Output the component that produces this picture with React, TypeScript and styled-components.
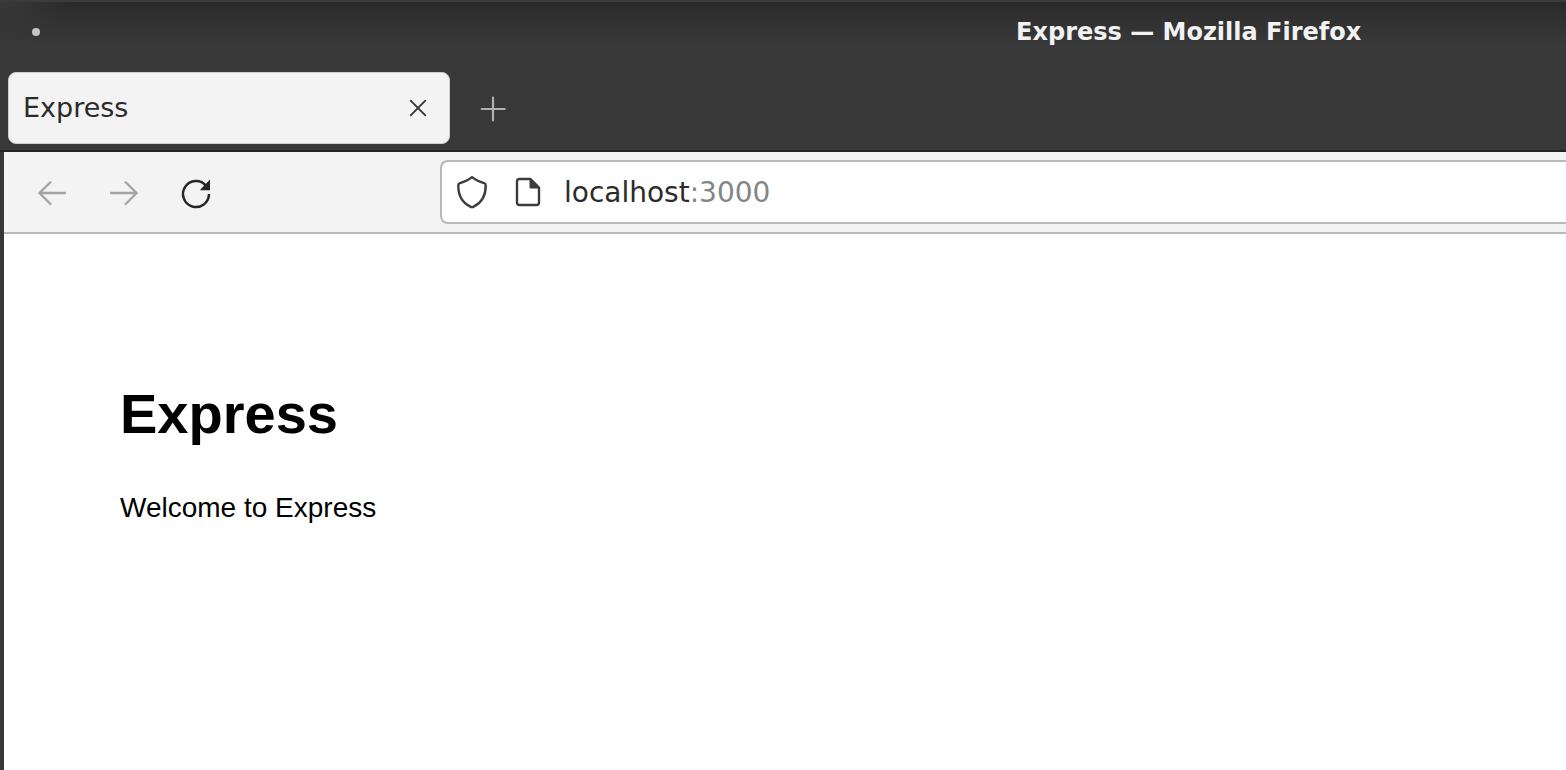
import React from 'react';
import styled, { createGlobalStyle } from 'styled-components';

const GlobalStyle = createGlobalStyle`
  * { box-sizing: border-box; }
  body { margin: 0; background: #383838; }
`;

const Window = styled.div`
  display: flex;
  flex-direction: column;
  min-height: 100vh;
  background: #383838;
  font-family: "DejaVu Sans", sans-serif;
  overflow: hidden;
`;

const TitleBar = styled.header`
  display: flex;
  align-items: center;
  height: 64px;
  padding: 0 0 2px 32px;
  border-top: 2px solid #3b3b3b;
  background: radial-gradient(ellipse 70px 60px at 0 0, #383838 0%, transparent 100%),
    linear-gradient(#2a2a2a 0, #303030 16px, #383838 42px);
`;

const MenuDot = styled.span`
  width: 8px;
  height: 8px;
  border-radius: 50%;
  background: #c4c4c4;
`;

const WindowTitle = styled.div`
  margin-left: 62%;
  padding-left: 25px;
  line-height: 28px;
  font-size: 24px;
  font-weight: 700;
  color: #f2f2f2;
  white-space: nowrap;
`;

const TabStrip = styled.div`
  display: flex;
  align-items: center;
  gap: 24px;
  height: 88px;
  padding: 2px 0 0 8px;
  border-bottom: 2px solid #262223;
`;

const Tab = styled.div`
  display: flex;
  align-items: center;
  justify-content: space-between;
  width: 442px;
  height: 72px;
  padding: 0 19px 0 14px;
  border: 1px solid #d0d0d0;
  border-radius: 8px;
  background: #f3f3f3;
  color: #2b2b2b;
  font-size: 27px;
  line-height: 32px;
`;

const IconButton = styled.button<{ $tone: string; $size: number }>`
  display: flex;
  align-items: center;
  justify-content: center;
  flex: none;
  width: ${(p) => p.$size}px;
  height: ${(p) => p.$size}px;
  padding: 0;
  border: 0;
  background: none;
  color: ${(p) => p.$tone};
`;

const Browser = styled.div`
  display: flex;
  flex-direction: column;
  flex: 1;
  margin-left: 4px;
  background: #fff;
`;

const Toolbar = styled.nav`
  display: flex;
  align-items: center;
  height: 82px;
  padding-left: 32px;
  border-bottom: 2px solid #b9b9b9;
  background: #f3f3f3;
`;

const NavButtons = styled.div`
  display: flex;
  flex: none;
  gap: 32px;
  width: 404px;
  padding-top: 2px;
`;

const AddressBar = styled.form`
  display: flex;
  align-items: center;
  flex: 1;
  height: 64px;
  padding-left: 10px;
  border: 2px solid #b9b9b9;
  border-right: 0;
  border-radius: 8px 0 0 8px;
  background: #fff;
`;

const SiteIcons = styled.div`
  display: flex;
  gap: 16px;
  color: #3c3c3c;
`;

const AddressField = styled.div`
  display: grid;
  flex: 1;
  padding: 2px 0 0 16px;
  font-size: 28px;
  line-height: 36px;
  color: #2b2b2b;
  white-space: nowrap;

  > * { grid-area: 1 / 1; }
`;

const Port = styled.span`
  color: #858585;
`;

const AddressInput = styled.input`
  width: 100%;
  padding: 0;
  border: 0;
  outline: 0;
  background: transparent;
  color: transparent;
  caret-color: #2b2b2b;
  font: inherit;
`;

const Page = styled.main`
  padding: 144px 116px;
  color: #000;
  font-family: "Liberation Sans", Arial, sans-serif;
`;

const PageHeading = styled.h1`
  margin: 0 0 42px;
  font-size: 56px;
  line-height: 72px;
`;

const PageText = styled.p`
  margin: 0;
  font-size: 28px;
  line-height: 32px;
`;

const CloseIcon = () => (
  <svg width="24" height="24" viewBox="0 0 24 24" fill="none" stroke="currentColor" strokeWidth="1.8" strokeLinecap="round">
    <path d="M4.7 4.7 19.3 19.3M19.3 4.7 4.7 19.3" />
  </svg>
);

const PlusIcon = () => (
  <svg width="40" height="40" viewBox="0 0 40 40" fill="none" stroke="currentColor" strokeWidth="2.2" strokeLinecap="round">
    <path d="M19 9.5v23M7.7 21h23" />
  </svg>
);

const BackIcon = () => (
  <svg width="40" height="40" viewBox="0 0 40 40" fill="none" stroke="currentColor" strokeWidth="2.3" strokeLinecap="round" strokeLinejoin="round">
    <path d="M29 20H3.4M14.5 9.2 3.4 20l11.1 11" />
  </svg>
);

const ForwardIcon = () => (
  <svg width="40" height="40" viewBox="0 0 40 40" fill="none" stroke="currentColor" strokeWidth="2.3" strokeLinecap="round" strokeLinejoin="round">
    <path d="M3 20h25.6M17.6 9.2 28.7 20 17.6 31" />
  </svg>
);

const ReloadIcon = () => (
  <svg width="40" height="40" viewBox="0 0 40 40" fill="none" stroke="currentColor" strokeWidth="2.5">
    <path d="M26 12.7A13 13 0 1 0 29 21" />
    <path d="M30 6.6V17.2H20.4Q20 16.8 20.4 16.4Z" fill="currentColor" stroke="none" />
  </svg>
);

const ShieldIcon = () => (
  <svg width="40" height="40" viewBox="0 0 40 40" fill="none" stroke="currentColor" strokeWidth="2.4" strokeLinejoin="round">
    <path d="M20 5.2C16.500 8.200 12 10 7.800 11.200Q6.300 11.700 6.300 13.200C6.200 22.500 9.300 30 18 34.400Q20 35.800 22 34.400C30.700 30 33.800 22.500 33.700 13.200Q33.700 11.700 32.200 11.200C28 10 23.500 8.200 20 5.200Z" />
  </svg>
);

const DocumentIcon = () => (
  <svg width="40" height="40" viewBox="0 0 40 40" fill="none" stroke="currentColor" strokeWidth="2.4" strokeLinejoin="round">
    <path d="M11.5 7H22.5L31 15.5V30.5Q31 33 28.5 33H11.5Q9 33 9 30.5V9.5Q9 7 11.5 7Z" />
    <path d="M22 7v9h9z" fill="currentColor" strokeWidth="1" />
  </svg>
);

export default function App() {
  return (
    <>
      <GlobalStyle />
      <Window>
        <TitleBar>
          <MenuDot />
          <WindowTitle>Express — Mozilla Firefox</WindowTitle>
        </TitleBar>
        <TabStrip>
          <Tab>
            <span>Express</span>
            <IconButton type="button" aria-label="Close tab" $tone="#333" $size={24}><CloseIcon /></IconButton>
          </Tab>
          <IconButton type="button" aria-label="New tab" $tone="#b0b0b0" $size={40}><PlusIcon /></IconButton>
        </TabStrip>
        <Browser>
          <Toolbar>
            <NavButtons>
              <IconButton type="button" aria-label="Back" $tone="#a3a3a3" $size={40}><BackIcon /></IconButton>
              <IconButton type="button" aria-label="Forward" $tone="#a3a3a3" $size={40}><ForwardIcon /></IconButton>
              <IconButton type="button" aria-label="Reload" $tone="#262626" $size={40}><ReloadIcon /></IconButton>
            </NavButtons>
            <AddressBar onSubmit={(e) => e.preventDefault()}>
              <SiteIcons>
                <ShieldIcon />
                <DocumentIcon />
              </SiteIcons>
              <AddressField>
                <span>localhost<Port>:3000</Port></span>
                <AddressInput type="text" aria-label="Address" />
              </AddressField>
            </AddressBar>
          </Toolbar>
          <Page>
            <PageHeading>Express</PageHeading>
            <PageText>Welcome to Express</PageText>
          </Page>
        </Browser>
      </Window>
    </>
  );
}
